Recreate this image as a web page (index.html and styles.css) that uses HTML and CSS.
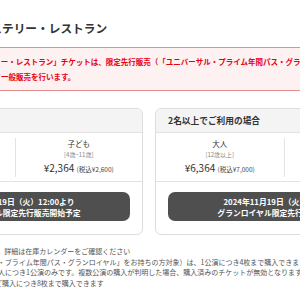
FILE: index.html
```html
<!DOCTYPE html>
<html lang="ja">
<head>
  <meta charset="UTF-8" />
  <meta name="viewport" content="width=device-width, initial-scale=1.0" />
  <title>ユニバーサル・ミステリー・レストラン</title>
  <link rel="stylesheet" href="styles.css">
</head>
<body>
  <div class="page">
    <h1 class="title">ユニバーサル・ミステリー・レストラン</h1>

    <div class="alert">
      <p>「ユニバーサル・ミステリー・レストラン」チケットは、限定先行販売（「ユニバーサル・プライム年間パス・グランロイヤル」対象）後、<br>その後、販売状況に応じて一般販売を行います。</p>
    </div>

    <div class="cards">
      <div class="card">
        <div class="card-head">1名でご利用の場合</div>
        <div class="price-row">
          <div class="price-col">
            <div class="who">大人</div>
            <div class="age">[12歳以上]</div>
            <div class="price">¥3,182 <span class="tax">(税込¥3,500)</span></div>
          </div>
          <div class="price-col">
            <div class="who">子ども</div>
            <div class="age">[4歳−11歳]</div>
            <div class="price">¥2,364 <span class="tax">(税込¥2,600)</span></div>
          </div>
        </div>
        <div class="card-foot">
          <div class="sale-btn">2024年11月19日（火）12:00より<br>グランロイヤル限定先行販売開始予定</div>
        </div>
      </div>

      <div class="card">
        <div class="card-head">2名以上でご利用の場合</div>
        <div class="price-row">
          <div class="price-col">
            <div class="who">大人</div>
            <div class="age">[12歳以上]</div>
            <div class="price">¥6,364 <span class="tax">(税込¥7,000)</span></div>
          </div>
          <div class="price-col">
            <div class="who">子ども</div>
            <div class="age">[4歳−11歳]</div>
            <div class="price">¥4,546 <span class="tax">(税込¥5,000)</span></div>
          </div>
        </div>
        <div class="card-foot">
          <div class="sale-btn">2024年11月19日（火）12:00より<br>グランロイヤル限定先行販売開始予定</div>
        </div>
      </div>
    </div>

    <ul class="notes">
      <li>・チケットは数に限りがあります。詳細は在庫カレンダーをご確認ください</li>
      <li>・限定先行販売（「ユニバーサル・プライム年間パス・グランロイヤル」をお持ちの方対象）は、1公演につき4枚まで購入できます。</li>
      <li>・限定先行販売でのご購入はお一人につき1公演のみです。複数公演の購入が判明した場合、購入済みのチケットが無効となります。</li>
      <li>・一般販売では、お一人様1回のご購入につき8枚まで購入できます</li>
    </ul>
  </div>
</body>
</html>
```

FILE: styles.css
```css
html, body {
  overflow: hidden;
}
body {
  margin: 0;
  background: #fff;
  color: #333;
  font-family: "Noto Sans CJK JP", "Noto Sans", sans-serif;
  text-spacing-trim: space-all;
}
.page {
  width: 526px;
  margin-left: -114px;
  padding-top: 20px;
}
.title {
  margin: 0 0 11px 11px;
  font-size: 11.7px;
  line-height: 16px;
  font-weight: bold;
  color: #333;
}
.alert {
  background: #fdf1f1;
  border: 1px solid #e58d8f;
  padding: 6px 23px 6px 24px;
}
.alert p {
  margin: 0;
  font-size: 7.5px;
  line-height: 15px;
  font-weight: bold;
  color: #e60012;
  white-space: nowrap;
}
.cards {
  display: grid;
  grid-template-columns: 257px 257px;
  gap: 12px;
  margin-top: 17px;
}
.card {
  border: 1px solid #ddd;
  border-radius: 6px;
  overflow: hidden;
}
.card-head {
  background: #f4f4f4;
  border-bottom: 1px solid #e3e3e3;
  padding: 0 12px;
  font-size: 8.7px;
  line-height: 23px;
  font-weight: bold;
}
.price-row {
  display: grid;
  grid-template-columns: 1fr 1fr;
  padding: 5px 0 4px;
  border-bottom: 1px solid #e3e3e3;
}
.price-col {
  text-align: center;
}
.price-col + .price-col {
  border-left: 1px solid #e3e3e3;
}
.who {
  font-size: 7.5px;
  line-height: 12px;
}
.age {
  font-size: 6px;
  line-height: 10px;
  color: #888;
}
.price {
  font-size: 10px;
  line-height: 15px;
}
.tax {
  font-size: 6.5px;
  color: #444;
}
.card-foot {
  padding: 10px 12px 13px;
}
.sale-btn {
  background: #4f4f4f;
  border-radius: 7px;
  padding: 3.5px 0;
  text-align: center;
  color: #fff;
  font-size: 7.8px;
  line-height: 11px;
  font-weight: bold;
}
.notes {
  list-style: none;
  margin: 11px 0 0;
  padding: 0 0 0 7px;
  font-size: 7px;
  line-height: 10.5px;
  color: #555;
}
.notes li {
  white-space: nowrap;
}
```
